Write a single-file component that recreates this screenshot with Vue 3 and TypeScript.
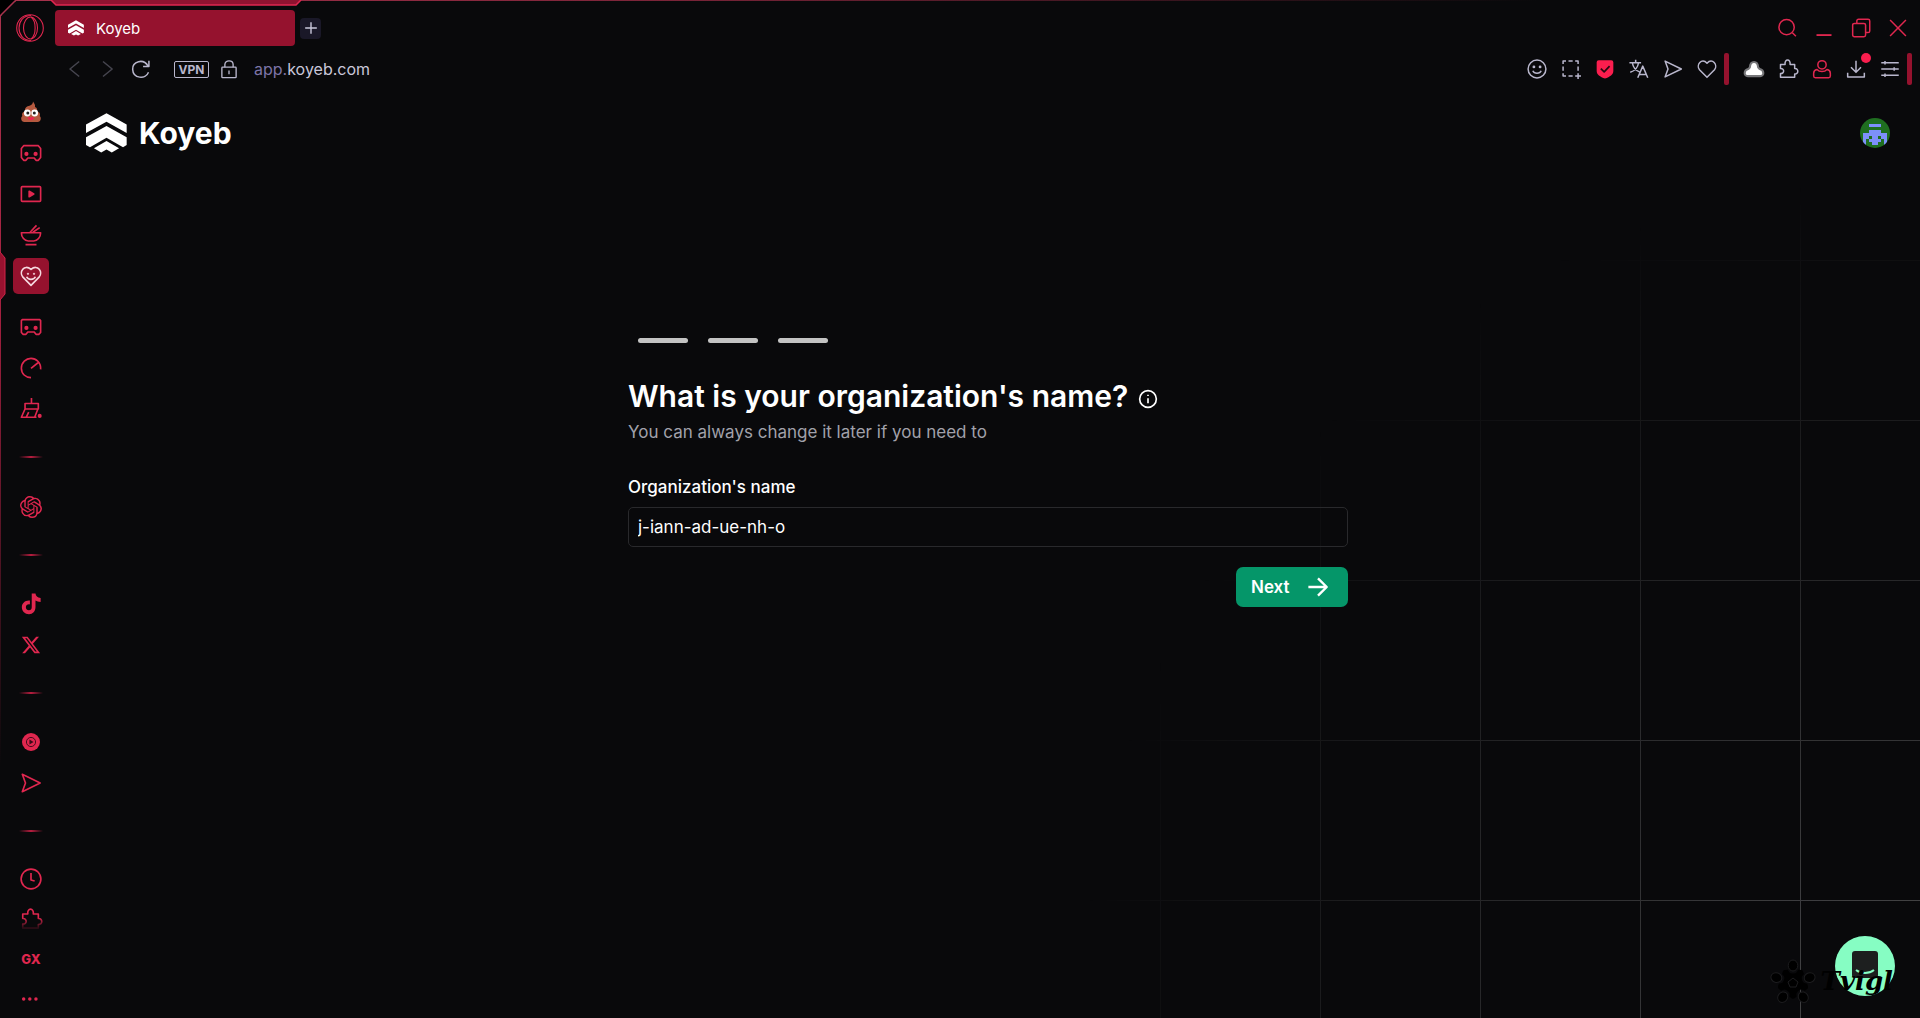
<script setup lang="ts">
import { ref } from 'vue'

interface Item {
  icon: string
  label: string
  active?: boolean
}

const organization = ref('j-iann-ad-ue-nh-o')

/* Stroke icons on a 24 x 24 grid */
const icons: Record<string, string> = {
  poop: '<path fill="#b4593f" stroke="none" d="M14 1.500c1 2 2.500 3 2 5.500 2 .8 2.600 2.400 2 4.500 3 .5 3.500 3 2.700 4.500 2 1.500 1.300 6-2 6H5.300c-3.300 0-4-4.500-2-6-.8-2 .2-4.300 2.700-4.500C5.600 7 8 6.500 10.500 5.700 13 4.800 14 3.500 14 1.500z"/><circle cx="8.300" cy="13" r="3.400" fill="#fff" stroke="none"/><circle cx="15.700" cy="13" r="3.400" fill="#fff" stroke="none"/><circle cx="8.800" cy="13" r="1.500" fill="#222" stroke="none"/><circle cx="15.300" cy="13" r="1.500" fill="#222" stroke="none"/><path fill="#f02050" stroke="none" d="M8.500 17.300h7c-.5 2-2 3-3.500 3s-3-1-3.500-3z"/>',
  pad: '<path d="M4 4h16l2.500 3v10l-2.500 3h-2.500l-2-2.500h-7L6.500 20H4l-2.500-3V7z"/><circle cx="7" cy="13" r="1.400" fill="currentColor"/><circle cx="17" cy="13" r="1.400" fill="currentColor"/>',
  pad2: '<path d="M2.500 4h19l1 1v13l-2 2h-3l-2-2.500h-7L6.500 20h-3l-2-2V5z"/><circle cx="7" cy="13" r="1.400" fill="currentColor"/><circle cx="17" cy="13" r="1.400" fill="currentColor"/>',
  video: '<rect x="1.500" y="4" width="21" height="16" rx="1"/><path fill="currentColor" d="M10 9l5 3-5 3z"/>',
  bowl: '<path d="M1.500 9.500h21c0 5-3.500 9-7.500 9H9c-4 0-7.500-4-7.500-9zM6 22.500h12M11 9l7-7.500M14 9l7.500-5"/>',
  heartface: '<path d="M12 22.200L3.200 13.300C-1.500 8 4.500-1.500 12 4.700c7.500-6.200 13.500 3.300 8.800 8.600z"/><path d="M7.200 12.800c1.500 3.800 8.100 3.800 9.600 0"/><circle cx="8.700" cy="9.600" r=".7" fill="currentColor" stroke-width="1"/><circle cx="15.300" cy="9.600" r=".7" fill="currentColor" stroke-width="1"/>',
  gauge: '<path d="M22.500 13.500C23 6 17.500 1.500 12 1.500S1.500 6 1.500 12.300c0 6 4.500 10.200 10.500 10.200M12 12.500l8-6.500"/>',
  broom: '<path d="M12.500 0V6M5.500 6H20v6H5.500zM5.500 12L1.500 21H16l3.500-9M7 20.500l2.500-5M16 21h2"/><circle cx="21.500" cy="19.500" r="1.300" fill="currentColor"/>',
  knot: '<path fill="currentColor" stroke="none" d="M22.282 9.821a5.985 5.985 0 0 0-.516-4.910 6.046 6.046 0 0 0-6.510-2.900A6.065 6.065 0 0 0 4.981 4.182a5.985 5.985 0 0 0-3.998 2.900 6.046 6.046 0 0 0 .743 7.097 5.980 5.980 0 0 0 .511 4.911 6.051 6.051 0 0 0 6.515 2.900A5.985 5.985 0 0 0 13.260 24a6.056 6.056 0 0 0 5.772-4.206 5.989 5.989 0 0 0 3.998-2.900 6.056 6.056 0 0 0-.748-7.073zm-9.022 12.608a4.476 4.476 0 0 1-2.876-1.041l.142-.080 4.778-2.758a.795.795 0 0 0 .393-.681v-6.737l2.020 1.169a.071.071 0 0 1 .038.052v5.583a4.504 4.504 0 0 1-4.495 4.494zm-9.661-4.125a4.471 4.471 0 0 1-.535-3.014l.142.085 4.783 2.758a.771.771 0 0 0 .781 0l5.843-3.369v2.332a.080.080 0 0 1-.033.062L9.740 19.950a4.499 4.499 0 0 1-6.141-1.646zM2.341 7.896a4.485 4.485 0 0 1 2.366-1.973V11.600a.766.766 0 0 0 .388.677l5.814 3.354-2.020 1.169a.076.076 0 0 1-.071 0l-4.830-2.787A4.504 4.504 0 0 1 2.341 7.872zm16.596 3.856L13.104 8.364 15.119 7.200a.076.076 0 0 1 .071 0l4.830 2.791a4.494 4.494 0 0 1-.677 8.104v-5.677a.790.790 0 0 0-.407-.667zm2.011-3.023l-.142-.085-4.774-2.782a.776.776 0 0 0-.785 0L9.409 9.230V6.897a.066.066 0 0 1 .028-.062l4.830-2.787a4.499 4.499 0 0 1 6.680 4.660zM8.307 12.863l-2.020-1.164a.080.080 0 0 1-.038-.057V6.074a4.499 4.499 0 0 1 7.376-3.454l-.142.081L8.704 5.459a.795.795 0 0 0-.393.681zm1.098-2.365l2.602-1.500 2.607 1.500v2.999l-2.597 1.500-2.607-1.500z"/>',
  note: '<path fill="currentColor" stroke="none" d="M12.800.5h4.100c.3 2.700 2 4.700 5.600 5v4.200c-2.200 0-4.200-.6-5.600-1.600v7.300c0 4.700-3 7.800-7.100 7.800-4.300 0-7.800-3.200-7.800-7.600 0-4.700 4-7.900 8.800-7.300v4.200c-2.300-.5-4.400.7-4.400 3 0 2 1.500 3.300 3.300 3.300 2 0 3.100-1.300 3.100-3.300z"/>',
  x: '<path transform="translate(2 2) scale(.83)" fill="currentColor" stroke="none" d="M18.901 1.153h3.680l-8.040 9.190L24 22.846h-7.406l-5.800-7.584-6.638 7.584H.474l8.600-9.830L0 1.154h7.594l5.243 6.932zM17.610 20.644h2.039L6.486 3.240H4.298z"/>',
  disc: '<circle cx="12" cy="12" r="9.800" fill="currentColor" stroke="none"/><circle cx="12" cy="12" r="5" stroke="#3a0a18" stroke-width="1"/><path fill="#3a0a18" stroke="none" d="M10.300 9.300l4.500 2.700-4.500 2.700z"/>',
  send: '<path d="M2.500 2.500L22 12 2.500 21.500 6 12z"/>',
  clock: '<circle cx="12" cy="12" r="10.800"/><path d="M12 5.500V13l4 1.200"/>',
  puzzle: '<path d="M3 6.500h5.500C7.500-.5 15.500-.5 14.500 6.500H20v5c5-.5 5 7 0 6.500V22H3v-4.500c5 .5 5-6.500 0-6z"/>',
  dots: '<circle cx="4" cy="12" r="1.900" fill="currentColor" stroke="none"/><circle cx="10.700" cy="12" r="1.900" fill="currentColor" stroke="none"/><circle cx="17.400" cy="12" r="1.900" fill="currentColor" stroke="none"/>',
  search: '<circle cx="11.500" cy="11" r="9.200"/><path d="M18.500 17.800l4.200 4.200"/>',
  minimize: '<path d="M3 20.500h18" stroke-width="2.200"/>',
  restore: '<rect x="2" y="6.500" width="15.500" height="16" rx="2"/><path d="M7 6.500V3.500a2 2 0 012-2h11.500a2 2 0 012 2v12a2 2 0 01-2 2h-3"/>',
  close: '<path d="M2.500 2.500l19 19M21.500 2.500l-19 19"/>',
  back: '<path d="M17 3L6 12l11 9"/>',
  forward: '<path d="M6 3l11 9-11 9"/>',
  reload: '<path d="M20.500 8.500C15-1 1.500 2.500 2 12.500c.5 11 15.500 12.500 19 3.500M21.500 2v7h-7"/>',
  lock: '<rect x="2.500" y="9.500" width="19" height="14" rx="1"/><path d="M6.500 9.500V6c0-6.500 11-6.500 11 0v3.500M12 14v5"/>',
  smile: '<circle cx="12" cy="12" r="10.700"/><path d="M7 14c1.500 4 8.500 4 10 0"/><circle cx="8.300" cy="9.500" r=".8" fill="currentColor"/><circle cx="15.700" cy="9.500" r=".8" fill="currentColor"/>',
  capture: '<path d="M2.500 6V2.500H6M9 2.500h5M17 2.500h3.500V6M20.500 9v5M2.500 9v5M2.500 17v3.500H6M9 20.500h5M20.500 17v7M17 20.500h7"/>',
  shield: '<path fill="#fa1e4e" stroke="none" d="M4.500 1.500h15a2.500 2.500 0 012.500 2.500v10c0 5-4 7-10 9.500C6 21 2 19 2 14V4a2.500 2.500 0 012.500-2.500z"/><path stroke="#250a12" stroke-width="2" d="M7 11.500l4 4 6.500-7"/>',
  translate: '<path d="M.500 4.500h14M8 1v3.500M4 4.500c1 6 5 9.500 8.500 11M11.500 4.500c-1 6-5 10-10 11.500M10.500 22.500l6-14 6 14M12.500 18.500h8"/>',
  heart: '<path d="M12 22L3 13C-1.500 7.500 5.500-2 12 5c6.500-7 13.500 2.500 9 8z"/>',
  cloud: '<path fill="#fff" stroke="#77777a" stroke-width="2.500" d="M4.500 20.500c-5 0-5-7 .5-8.500.8-.5 1.200-1 2-2 .8-8.500 9.200-8.500 10 0 .8 1 1.200 1.500 2 2 5.500 1.500 5.500 8.500.5 8.500z"/>',
  person: '<circle cx="12" cy="7" r="5"/><path d="M6 12.500c-2.500.5-4 2-4 4.500v3.500c0 1 .8 2 2 2h16c1.200 0 2-1 2-2V17c0-2.500-1.500-4-4-4.500-3 3.500-9 3.500-12 0z"/>',
  download: '<path d="M12 2v13M6 10l6 6 6-6M2 16.500v5h20v-5"/>',
  sliders: '<path d="M1.500 4.500h21M1.500 12h21M1.500 19.500h21M6 2.500v4M17 10v4M6 17.500v4"/>',
  info: '<circle cx="12" cy="12" r="10"/><path d="M12 11v6M12 7v1.500"/>',
  arrow: '<path stroke-width="2.600" d="M1.500 12h20.500M12 2.500L21.500 12 12 21.500"/>',
  plus: '<path d="M12 2v20M2 12h20"/>',
}

const sideGroups: Item[][] = [
  [
    { icon: 'poop', label: 'Pinned page' },
    { icon: 'pad', label: 'Games' },
    { icon: 'video', label: 'Player' },
    { icon: 'bowl', label: 'Food' },
    { icon: 'heartface', label: 'Workspace', active: true },
  ],
  [
    { icon: 'pad2', label: 'GX Corner' },
    { icon: 'gauge', label: 'GX Control' },
    { icon: 'broom', label: 'GX Cleaner' },
  ],
  [{ icon: 'knot', label: 'ChatGPT' }],
  [
    { icon: 'note', label: 'TikTok' },
    { icon: 'x', label: 'X' },
  ],
  [
    { icon: 'disc', label: 'Music' },
    { icon: 'send', label: 'My Flow' },
  ],
  [
    { icon: 'clock', label: 'History' },
    { icon: 'puzzle', label: 'Extensions' },
    { icon: 'gx', label: 'GX' },
    { icon: 'dots', label: 'More' },
  ],
]

const windowActions: Item[] = [
  { icon: 'search', label: 'Search tabs' },
  { icon: 'minimize', label: 'Minimize' },
  { icon: 'restore', label: 'Restore' },
  { icon: 'close', label: 'Close' },
]
const pageActions: Item[] = [
  { icon: 'smile', label: 'Emoji' },
  { icon: 'capture', label: 'Snapshot' },
  { icon: 'shield', label: 'Ad blocker' },
  { icon: 'translate', label: 'Translate' },
  { icon: 'send', label: 'Share' },
  { icon: 'heart', label: 'Favourite' },
]
const browserActions: Item[] = [
  { icon: 'cloud', label: 'Cloud' },
  { icon: 'puzzle', label: 'Extensions' },
  { icon: 'person', label: 'Profile' },
  { icon: 'download', label: 'Downloads' },
  { icon: 'sliders', label: 'Easy setup' },
]

const markPath =
  'M62 0L123 34V60L62 26 0 60V34zM62 39L123 73V96L112 103 62 74 12 103 0 96V73zM62 84L100 106 78 119 62 110 46 119 24 106z'
</script>

<template>
  <div class="window">
    <div class="edge-top"></div>
    <div class="edge-left"></div>
    <svg class="edge-corner" viewBox="0 0 16 16" aria-hidden="true">
      <path d="M0 0H15L0 15z" fill="#000" />
      <path d="M1 16V15L15 1H16" fill="none" stroke="#a8324c" stroke-width="1.500" />
    </svg>
    <svg class="tab-notch" viewBox="0 0 252 6" aria-hidden="true">
      <path d="M1 0L6 5H246L251 0z" fill="#8f1330" />
      <path d="M1 0L6 5H246L251 0" fill="none" stroke="#e02750" stroke-width="1.500" />
    </svg>
    <header class="tabs">
      <button class="opera" aria-label="Menu">
        <svg viewBox="0 0 28 28" fill="none" stroke="currentColor" stroke-width="1.100">
          <circle cx="14" cy="14" r="13.300" />
          <ellipse cx="14.500" cy="14" rx="7" ry="11" />
          <path d="M15 1.500C-1 1.500-1 26.500 15 26.500M15 3c5.500 4 5.500 18 0 22" />
        </svg>
      </button>
      <button class="tab">
        <svg class="favicon" viewBox="0 0 124 120" fill="#fff"><path :d="markPath" /></svg>
        <span>Koyeb</span>
      </button>
      <button class="new-tab" aria-label="New tab">
        <svg viewBox="0 0 24 24" class="icon small" v-html="icons.plus"></svg>
      </button>
      <div class="window-actions">
        <button v-for="a in windowActions" :key="a.label" :aria-label="a.label">
          <svg viewBox="0 0 24 24" class="icon" v-html="icons[a.icon]"></svg>
        </button>
      </div>
    </header>

    <div class="toolbar">
      <button class="nav dim" aria-label="Back">
        <svg viewBox="0 0 24 24" class="icon" v-html="icons.back"></svg>
      </button>
      <button class="nav dim" aria-label="Forward">
        <svg viewBox="0 0 24 24" class="icon" v-html="icons.forward"></svg>
      </button>
      <button class="nav" aria-label="Reload">
        <svg viewBox="0 0 24 24" class="icon" v-html="icons.reload"></svg>
      </button>
      <button class="vpn">VPN</button>
      <button class="lock" aria-label="Site security">
        <svg viewBox="0 0 24 24" class="icon" v-html="icons.lock"></svg>
      </button>
      <a class="address" href="#"><span>app.</span>koyeb.com</a>
      <div class="actions">
        <button v-for="a in pageActions" :key="a.label" :aria-label="a.label">
          <svg viewBox="0 0 24 24" class="icon" v-html="icons[a.icon]"></svg>
        </button>
        <i class="bar first"></i>
        <button v-for="a in browserActions" :key="a.label" :class="a.icon" :aria-label="a.label">
          <svg viewBox="0 0 24 24" class="icon" v-html="icons[a.icon]"></svg>
          <b v-if="a.icon === 'download'" class="badge"></b>
        </button>
        <i class="bar"></i>
      </div>
    </div>

    <div class="body">
      <nav class="sidebar">
        <div v-for="(group, i) in sideGroups" :key="i" class="group">
          <button
            v-for="item in group"
            :key="item.label"
            :class="['side', item.icon, { active: item.active }]"
            :aria-label="item.label"
          >
            <svg v-if="item.active" class="pointer" viewBox="0 0 6 48">
              <path d="M0 0L5 6V42L0 48z" fill="#97122f" />
              <path d="M0 0L5 6V42L0 48" fill="none" stroke="#d02549" />
            </svg>
            <template v-if="item.icon === 'gx'">GX</template>
            <svg v-else viewBox="0 0 24 24" class="icon" v-html="icons[item.icon]"></svg>
          </button>
        </div>
      </nav>

      <main class="page">
        <div class="grid-lines"></div>
        <header class="brand-bar">
          <a class="brand" href="#">
            <svg viewBox="0 0 124 120" fill="#fff" aria-hidden="true"><path :d="markPath" /></svg>
            <span>Koyeb</span>
          </a>
          <button class="avatar" aria-label="Account">
            <svg viewBox="0 0 90 90" shape-rendering="crispEdges">
              <rect width="90" height="90" fill="#1f6e20" />
              <path
                fill="#7d90fb"
                d="M27 18h36v9H27zM27 36h36v9H27zM9 45h72v9H9zM9 54h18v9H9zM36 54h18v9H36zM63 54h18v9H63zM9 63h9v18H9zM27 63h36v9H27zM72 63h9v18h-9zM36 72h18v9H36z"
              />
            </svg>
          </button>
        </header>

        <form class="onboarding" @submit.prevent>
          <div class="steps"><i v-for="n in 3" :key="n"></i></div>
          <h1>
            What is your organization's name?
            <svg viewBox="0 0 24 24" class="icon" v-html="icons.info"></svg>
          </h1>
          <p>You can always change it later if you need to</p>
          <label for="org">Organization's name</label>
          <input id="org" v-model="organization" type="text" spellcheck="false" />
          <button class="next" type="submit">
            Next
            <svg viewBox="0 0 24 24" class="icon" v-html="icons.arrow"></svg>
          </button>
        </form>

        <button class="chat" aria-label="Open chat">
          <svg viewBox="0 0 60 60">
            <circle cx="30" cy="30" r="30" fill="#86fdc3" />
            <rect x="17" y="15" width="26" height="27" rx="3" fill="#1d1f1f" />
            <path d="M21 34c5 4 13 4 18 0" fill="none" stroke="#86fdc3" stroke-width="2" />
          </svg>
        </button>
        <div class="watermark">
          <svg viewBox="-24 -24 48 48" aria-hidden="true" stroke="#1c1c1e" stroke-width="1">
            <g v-for="n in 5" :key="n" :transform="`rotate(${n * 72})`">
              <ellipse cy="-17.500" rx="4.800" ry="5.500" />
              <path d="M-11 -9Q-9 -16 -5 -11Q0 -8 5 -11Q9 -16 11 -9L0 4z" stroke="none" />
            </g>
            <path d="M0 -5L5 -1 3 4H-3L-5 -1z" />
          </svg>
          <span>Tvigl</span>
        </div>
      </main>
    </div>
  </div>
</template>

<style>
body {
  background: #09090b;
}
</style>

<style scoped>
* {
  box-sizing: border-box;
}
.window {
  position: relative;
  display: flex;
  flex-direction: column;
  height: 100vh;
  overflow: hidden;
  background: #09090b;
  color: #fff;
  font-family: Inter, 'Liberation Sans', sans-serif;
  font-size: 16px;
}
button {
  display: flex;
  flex: none;
  align-items: center;
  justify-content: center;
  padding: 0;
  border: 0;
  background: none;
  color: inherit;
  font: inherit;
}
a {
  color: inherit;
  text-decoration: none;
}
.icon {
  display: block;
  flex: none;
  width: 20px;
  height: 20px;
  overflow: visible;
  fill: none;
  stroke: currentColor;
  stroke-width: 1.8;
  stroke-linejoin: round;
}
.edge-top {
  position: absolute;
  top: 0;
  left: 15px;
  right: 0;
  height: 1px;
  background: linear-gradient(90deg, #a8324c, #7a2438 35%, transparent 80%);
}
.edge-left {
  position: absolute;
  top: 15px;
  left: 0;
  bottom: 0;
  width: 1px;
  background: linear-gradient(#a8324c, #a3203f 30%, transparent 75%);
}
.edge-corner {
  position: absolute;
  top: 0;
  left: 0;
  width: 16px;
  height: 16px;
}
.tab-notch {
  position: absolute;
  top: 0;
  left: 50px;
  width: 252px;
  height: 6px;
}
.tabs {
  display: flex;
  align-items: center;
  height: 56px;
  padding: 0 4px 0 16px;
}
.opera {
  width: 28px;
  height: 28px;
  margin-right: 11px;
  color: #e0274f;
}
.opera svg {
  width: 28px;
  height: 28px;
}
.tab {
  justify-content: flex-start;
  gap: 12px;
  width: 240px;
  height: 36px;
  padding-left: 13px;
  border-radius: 4px;
  background: #95122e;
  font-size: 15px;
}
.favicon {
  width: 16px;
  height: 16px;
}
.new-tab {
  width: 21px;
  height: 21px;
  margin-left: 5px;
  border-radius: 4px;
  background: #1a1828;
  color: #c9c7da;
}
.icon.small {
  width: 14px;
  height: 14px;
  stroke-width: 2.4;
}
.window-actions {
  display: flex;
  gap: 1px;
  margin-left: auto;
  color: #e0274f;
}
.window-actions button {
  width: 36px;
  height: 36px;
}
.toolbar {
  display: flex;
  align-items: center;
  height: 26px;
  padding: 0 8px 0 58px;
  color: #b9b7cd;
}
.nav {
  width: 33px;
}
.dim {
  color: #46454f;
}
.vpn {
  width: 35px;
  height: 17px;
  margin-left: 17px;
  border: 1px solid #b9b7cd;
  border-radius: 2px;
  font-size: 12px;
  font-weight: 700;
}
.lock {
  width: 20px;
  margin: 0 15px 0 10px;
}
.lock .icon {
  width: 18px;
  height: 18px;
}
.address {
  color: #c9c7da;
  font-size: 16px;
}
.address span {
  color: #7d74a8;
}
.actions {
  display: flex;
  align-items: center;
  margin-left: auto;
}
.actions button {
  position: relative;
  width: 34px;
  height: 26px;
}
.actions .person {
  color: #e0274f;
}
.badge {
  position: absolute;
  top: -3px;
  right: 2px;
  width: 10px;
  height: 10px;
  border-radius: 50%;
  background: #fa1e4e;
}
.bar {
  width: 5px;
  height: 32px;
  border-radius: 2px;
  background: #95122e;
}
.first {
  margin-right: 8px;
}
.body {
  display: flex;
  flex: 1;
  min-height: 0;
}
.sidebar {
  flex: none;
  width: 56px;
  padding: 12px 0 0 13px;
  color: #e0274f;
}
.group {
  display: flex;
  flex-direction: column;
  gap: 5px;
}
.group:last-child {
  gap: 4px;
}
.group:nth-child(2) {
  margin-top: 15px;
}
/* Fading rule above each later group */
.group:nth-child(n + 3)::before {
  content: '';
  width: 24px;
  height: 2px;
  margin: 29px 0 26px 6px;
  background: linear-gradient(90deg, transparent, #b81d3f 50%, transparent);
}
.group:nth-child(n + 4)::before {
  margin-bottom: 25px;
}
.side {
  position: relative;
  width: 36px;
  height: 36px;
  border-radius: 5px;
}
.side .icon {
  width: 22px;
  height: 22px;
}
.poop .icon {
  width: 24px;
  height: 24px;
}
.active {
  background: #95122e;
  color: #f6d9e0;
}
.pointer {
  position: absolute;
  top: -6px;
  left: -13px;
  width: 6px;
  height: 48px;
}
.puzzle.side {
  -webkit-mask-image: linear-gradient(#000 45%, rgba(0, 0, 0, 0.15) 75%);
  mask-image: linear-gradient(#000 45%, rgba(0, 0, 0, 0.15) 75%);
}
.gx {
  font-size: 13px;
  font-weight: 800;
}
.page {
  position: relative;
  flex: 1;
  min-width: 0;
}
.grid-lines {
  position: absolute;
  inset: 0;
  background-image:
    linear-gradient(90deg, #4a4a4c 1px, transparent 1px),
    linear-gradient(#4a4a4c 1px, transparent 1px);
  background-position:
    right -40px bottom 0,
    right 0 bottom -42px;
  background-size: 160px 160px;
  -webkit-mask-image: radial-gradient(circle 840px at 100% 100%, #000, transparent);
  mask-image: radial-gradient(circle 840px at 100% 100%, #000, transparent);
}
.brand-bar {
  position: relative;
  display: flex;
  align-items: center;
  justify-content: space-between;
  height: 102px;
  padding: 0 30px;
}
.brand {
  display: flex;
  align-items: center;
  gap: 12px;
  font-size: 30px;
  font-weight: 700;
}
.brand svg {
  width: 41px;
  height: 40px;
}
.avatar {
  width: 30px;
  height: 30px;
  overflow: hidden;
  border-radius: 50%;
}
.avatar svg {
  width: 30px;
  height: 30px;
}
.onboarding {
  position: relative;
  display: flex;
  flex-direction: column;
  width: 720px;
  max-width: 100%;
  margin: 0 auto;
  padding-top: 154px;
}
.steps {
  display: flex;
  gap: 20px;
  padding-left: 10px;
}
.steps i {
  width: 50px;
  height: 5px;
  border-radius: 3px;
  background: #c3c3c3;
}
h1 {
  display: flex;
  align-items: center;
  gap: 10px;
  margin: 33px 0 0;
  font-size: 30px;
  font-weight: 600;
  line-height: 40px;
}
h1 .icon {
  margin-top: 5px;
  stroke-width: 2;
}
p {
  margin: 4px 0 0;
  color: #a1a1aa;
  font-size: 17px;
  line-height: 24px;
}
label {
  margin-top: 31px;
  font-size: 17px;
  font-weight: 500;
  line-height: 24px;
}
input {
  height: 40px;
  margin-top: 8px;
  padding: 0 9px;
  border: 1px solid #29292c;
  border-radius: 5px;
  outline: none;
  background: transparent;
  color: #fff;
  font: inherit;
  font-size: 17px;
}
.next {
  align-self: flex-end;
  justify-content: space-between;
  width: 112px;
  height: 40px;
  margin-top: 20px;
  padding: 0 19px 0 15px;
  border-radius: 7px;
  background: #059669;
  font-size: 17px;
  font-weight: 600;
}
.next .icon {
  width: 22px;
  height: 22px;
}
.chat {
  position: absolute;
  right: 25px;
  bottom: 22px;
  width: 60px;
  height: 60px;
}
.chat svg {
  width: 60px;
  height: 60px;
}
.watermark {
  position: absolute;
  right: 27px;
  bottom: 11px;
  display: flex;
  align-items: center;
  gap: 4px;
  color: #000;
  font: italic 700 26px 'DejaVu Serif', serif;
}
.watermark svg {
  width: 48px;
  height: 48px;
}
.watermark span {
  padding-bottom: 4px;
}
</style>
